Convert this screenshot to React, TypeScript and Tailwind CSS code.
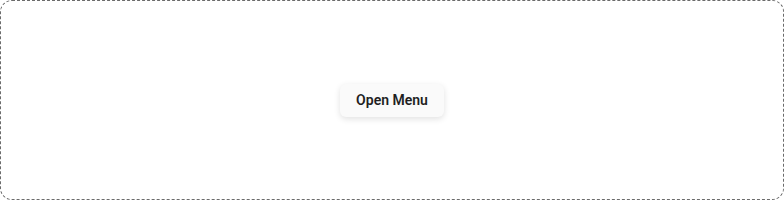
import React from 'react';

export default function App() {
  return (
    <div className="w-[784px] h-[200px] bg-white">
      <div className="h-full w-full rounded-xl border border-dashed border-[#6b6b6b] flex items-center justify-center">
        <button
          type="button"
          className="h-[33px] px-4 rounded-md bg-[#fafafa] text-[14px] font-semibold text-[#1f1f1f] shadow-[0_2px_6px_rgba(0,0,0,0.12)] font-['Roboto',sans-serif]"
        >
          Open Menu
        </button>
      </div>
    </div>
  );
}
